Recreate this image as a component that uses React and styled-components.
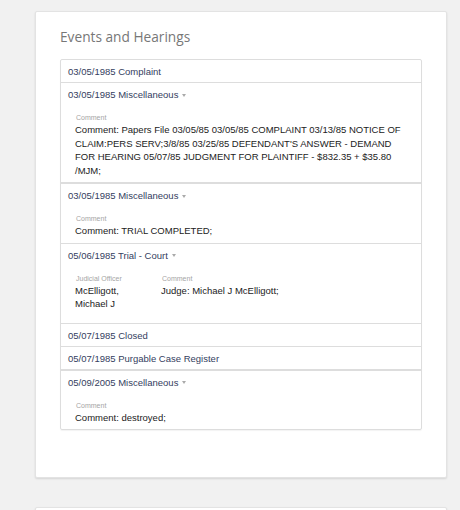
import React from 'react';
import styled, { createGlobalStyle } from 'styled-components';

const GlobalStyle = createGlobalStyle`
  html, body {
    margin: 0;
    padding: 0;
    background: #f1f1f1;
    font-family: 'Liberation Sans', Arial, sans-serif;
  }
`;

const events = [
  { date: '03/05/1985', title: 'Complaint' },
  {
    date: '03/05/1985',
    title: 'Miscellaneous',
    fields: [
      {
        label: 'Comment',
        value:
          "Comment: Papers File 03/05/85 03/05/85 COMPLAINT 03/13/85 NOTICE OF CLAIM:PERS SERV;3/8/85 03/25/85 DEFENDANT'S ANSWER - DEMAND FOR HEARING 05/07/85 JUDGMENT FOR PLAINTIFF - $832.35 + $35.80 /MJM;",
      },
    ],
  },
  {
    date: '03/05/1985',
    title: 'Miscellaneous',
    thick: true,
    fields: [{ label: 'Comment', value: 'Comment: TRIAL COMPLETED;' }],
  },
  {
    date: '05/06/1985',
    title: 'Trial - Court',
    extra: true,
    fields: [
      { label: 'Judicial Officer', value: 'McElligott, Michael J', width: 86 },
      { label: 'Comment', value: 'Judge: Michael J McElligott;' },
    ],
  },
  { date: '05/07/1985', title: 'Closed' },
  { date: '05/07/1985', title: 'Purgable Case Register' },
  {
    date: '05/09/2005',
    title: 'Miscellaneous',
    thick: true,
    fields: [{ label: 'Comment', value: 'Comment: destroyed;' }],
  },
];

const App = () => {
  return (
    <Page>
      <GlobalStyle />
      <Card>
        <Title>Events and Hearings</Title>
        <List>
          {events.map((ev, i) => (
            <Item key={i} $first={i === 0} $thick={ev.thick}>
              <Header>
                {ev.date} {ev.title}
                {ev.fields && <Caret />}
              </Header>
              {ev.fields && (
                <Details $extra={ev.extra}>
                  {ev.fields.map((f, j) => (
                    <Field key={j} $width={f.width}>
                      <Label>{f.label}</Label>
                      <Value>{f.value}</Value>
                    </Field>
                  ))}
                </Details>
              )}
            </Item>
          ))}
        </List>
      </Card>
      <Card $next />
    </Page>
  );
};

export default App;

const Page = styled.div`
  padding: 11px 14px 0 35px;
  display: flex;
  flex-direction: column;
  gap: 29px;
`;

const Card = styled.section`
  width: 362px;
  height: ${(p) => (p.$next ? '20px' : '419px')};
  background: #fff;
  border: 1px solid #e3e3e3;
  box-shadow: 0 1px 2px rgba(0, 0, 0, 0.12);
  border-radius: 2px;
  padding: 16px 24px 30px 24px;
`;

const Title = styled.h2`
  margin: 0 0 13px;
  font-family: 'Open Sans', sans-serif;
  font-weight: 400;
  font-size: 13.7px;
  line-height: 18px;
  color: #777;
`;

const List = styled.div`
  border: 1px solid #ddd;
  border-radius: 2px;
  box-shadow: 0 1px 1px rgba(0, 0, 0, 0.05);
`;

const Item = styled.div`
  border-top: ${(p) => (p.$first ? 'none' : p.$thick ? '2px solid #ddd' : '1px solid #ddd')};
`;

const Header = styled.div`
  display: flex;
  align-items: center;
  padding: 5px 7px 4px;
  font-size: 9.5px;
  line-height: 13px;
  color: #34405e;
`;

const Caret = styled.span`
  display: inline-block;
  margin-left: 4px;
  margin-top: 1px;
  border-left: 2.5px solid transparent;
  border-right: 2.5px solid transparent;
  border-top: 3px solid #aaa;
`;

const Details = styled.div`
  display: flex;
  padding: 8px 15px ${(p) => (p.$extra ? '12px' : '5px')} 14px;
`;

const Field = styled.div`
  flex: ${(p) => (p.$width ? `0 0 ${p.$width}px` : '1')};
  padding-right: ${(p) => (p.$width ? '10px' : '0')};
  box-sizing: border-box;
`;

const Label = styled.div`
  font-size: 7px;
  line-height: 10px;
  color: #a5a5a5;
  padding-left: 1px;
`;

const Value = styled.div`
  font-size: 9.5px;
  line-height: 13.5px;
  color: #222;
`;
